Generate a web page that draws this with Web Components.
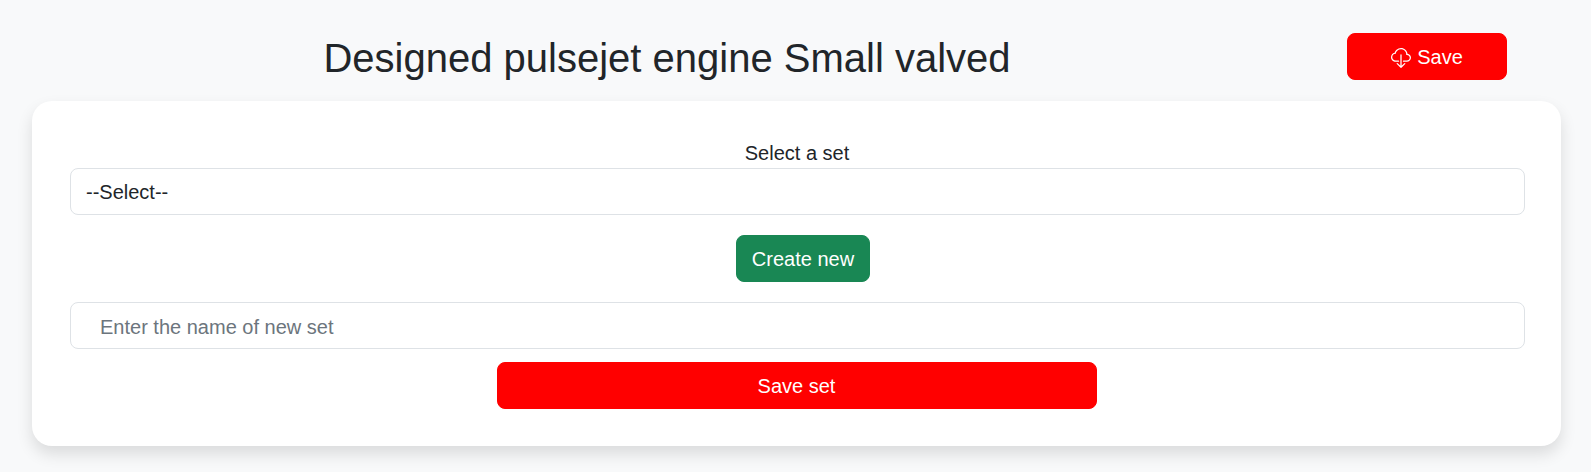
<!DOCTYPE html>
<html><head><meta charset="utf-8"><style>
html,body{margin:0;padding:0;background:#f8f9fa;}
body{font-family:"Liberation Sans",Arial,sans-serif;color:#212529;height:472px;overflow:hidden;}
</style></head><body>
<template id="t-btn"><style>
:host{display:inline-flex;}
button{font:inherit;font-size:20px;line-height:30px;height:47px;width:100%;box-sizing:border-box;border:1px solid var(--bg);background:var(--bg);color:#fff;border-radius:8px;padding:0 15px;display:flex;align-items:center;justify-content:center;gap:6px;cursor:pointer;}
</style><button part="b"><slot></slot></button></template>
<template id="t-head"><style>
:host{display:flex;align-items:center;height:101px;box-sizing:border-box;padding:0 84px 0 0;}
.t{flex:1;text-align:center;font-size:40px;line-height:48px;font-weight:400;margin:0;padding:14px 13px 0 0;}
::slotted(x-btn){width:160px;margin-top:12px;}
</style><h1 class="t"><slot name="title"></slot></h1><slot></slot></template>
<template id="t-card"><style>
:host{display:flex;flex-direction:column;align-items:center;box-sizing:border-box;margin:0 30px 0 32px;height:345px;background:#fff;border-radius:20px;box-shadow:0 8px 16px rgba(0,0,0,.12);padding:38px 36px 0 38px;}
</style><slot></slot></template>
<template id="t-field"><style>
:host{display:block;width:100%;box-sizing:border-box;height:47px;border:1px solid #dee2e6;border-radius:8px;font-size:20px;line-height:var(--lh,47px);padding:0 var(--pad,15px);color:var(--c,#212529);background:#fff;}
</style><slot></slot></template>
<script>
for(const [n,t] of [['x-btn','t-btn'],['x-head','t-head'],['x-card','t-card'],['x-field','t-field']]){
customElements.define(n,class extends HTMLElement{constructor(){super();this.attachShadow({mode:'open'}).append(document.getElementById(t).content.cloneNode(true));}});
}
</script>
<x-head><span slot="title">Designed pulsejet engine Small valved</span>
<x-btn style="--bg:#f00"><svg style="margin-top:2px" width="20" height="20" viewBox="0 0 16 16" fill="#fff"><path fill-rule="evenodd" d="M4.406 1.342A5.53 5.53 0 0 1 8 0c2.69 0 4.923 2 5.166 4.579C14.758 4.804 16 6.137 16 7.773 16 9.569 14.502 11 12.687 11H10a.5.5 0 0 1 0-1h2.688C13.979 10 15 8.988 15 7.773c0-1.216-1.02-2.228-2.313-2.228h-.5v-.5C12.188 2.825 10.328 1 8 1a4.53 4.53 0 0 0-2.941 1.1c-.757.652-1.153 1.438-1.153 2.055v.448l-.445.049C2.064 4.805 1 5.952 1 7.318 1 8.785 2.23 10 3.781 10H6a.5.5 0 0 1 0 1H3.781C1.708 11 0 9.366 0 7.318c0-1.763 1.266-3.223 2.942-3.593.143-.863.698-1.723 1.464-2.383z"/><path fill-rule="evenodd" d="M7.646 15.854a.5.5 0 0 0 .708 0l3-3a.5.5 0 0 0-.708-.708L8.5 14.293V5.5a.5.5 0 0 0-1 0v8.793l-2.146-2.147a.5.5 0 0 0-.708.708l3 3z"/></svg>Save</x-btn></x-head>
<x-card>
<div style="font-size:20px;line-height:28px;height:29px;margin-left:-1px;">Select a set</div>
<x-field>--Select--</x-field>
<x-btn style="--bg:#198754;margin-top:20px;margin-left:11px">Create new</x-btn>
<x-field style="margin-top:20px;--pad:29px;--c:#6c757d;--lh:49px">Enter the name of new set</x-field>
<x-btn style="--bg:#f00;margin-top:13px;width:600px;margin-left:-2px">Save set</x-btn>
</x-card>
</body></html>
